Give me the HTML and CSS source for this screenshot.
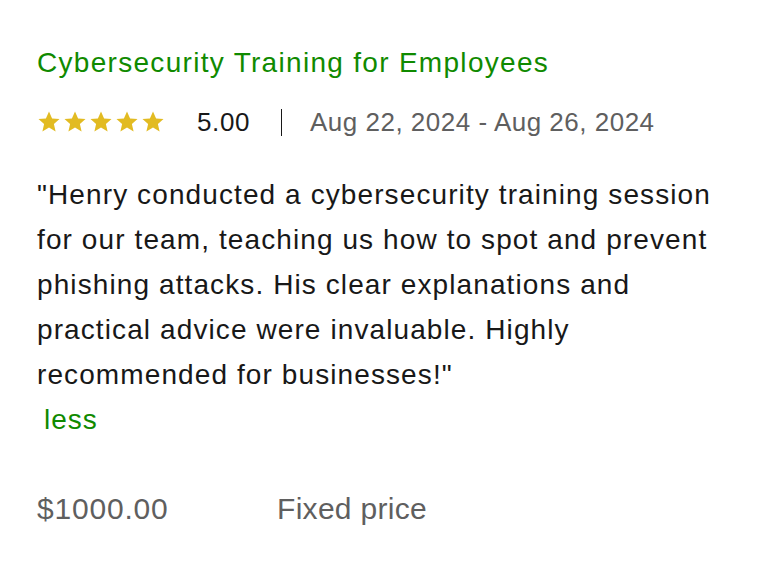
FILE: index.html
```
<!DOCTYPE html>
<html>
<head>
<meta charset="utf-8">
<link rel="stylesheet" href="styles.css">
</head>
<body>
<div class="card">
  <h2 class="title">Cybersecurity Training for Employees</h2>
  <div class="meta">
    <div class="stars">
      <svg viewBox="0 0 24 24" class="star"><path d="M12 1.5l3.1 7 7.4.6-5.6 5 1.7 7.4L12 17.6l-6.6 3.9 1.7-7.4-5.6-5 7.4-.6z"/></svg>
      <svg viewBox="0 0 24 24" class="star"><path d="M12 1.5l3.1 7 7.4.6-5.6 5 1.7 7.4L12 17.6l-6.6 3.9 1.7-7.4-5.6-5 7.4-.6z"/></svg>
      <svg viewBox="0 0 24 24" class="star"><path d="M12 1.5l3.1 7 7.4.6-5.6 5 1.7 7.4L12 17.6l-6.6 3.9 1.7-7.4-5.6-5 7.4-.6z"/></svg>
      <svg viewBox="0 0 24 24" class="star"><path d="M12 1.5l3.1 7 7.4.6-5.6 5 1.7 7.4L12 17.6l-6.6 3.9 1.7-7.4-5.6-5 7.4-.6z"/></svg>
      <svg viewBox="0 0 24 24" class="star"><path d="M12 1.5l3.1 7 7.4.6-5.6 5 1.7 7.4L12 17.6l-6.6 3.9 1.7-7.4-5.6-5 7.4-.6z"/></svg>
    </div>
    <span class="score">5.00</span>
    <span class="sep"></span>
    <span class="dates">Aug 22, 2024 - Aug 26, 2024</span>
  </div>
  <p class="review">"Henry conducted a cybersecurity training session for our team, teaching us how to spot and prevent phishing attacks. His clear explanations and practical advice were invaluable. Highly recommended for businesses!"</p>
  <a class="less">less</a>
  <div class="price-row">
    <span class="price">$1000.00</span>
    <span class="type">Fixed price</span>
  </div>
</div>
</body>
</html>
```
FILE: styles.css
```
* { box-sizing: border-box; }
body {
  margin: 0;
  background: #fff;
  font-family: "Liberation Sans", Arial, sans-serif;
  color: #181818;
}
.card {
  padding: 45px 37px 0;
  width: 758px;
}
.title {
  margin: 0;
  font-size: 28px;
  letter-spacing: 1.3px;
  font-weight: 400;
  color: #108a00;
  line-height: 36px;
}
.meta {
  display: flex;
  align-items: center;
  margin-top: 27px;
  height: 28px;
}
.stars { display: flex; gap: 2px; }
.star { width: 24px; height: 24px; fill: #e2bb22; }
.score {
  margin-left: 32px;
  font-size: 26px;
  letter-spacing: 0.6px;
  color: #181818;
}
.sep {
  width: 1px;
  height: 27px;
  background: #181818;
  margin: 0 28px 0 31px;
}
.dates {
  font-size: 26px;
  letter-spacing: 0.5px;
  color: #5f5f5f;
}
.review {
  margin: 36px 0 0;
  font-size: 28px;
  letter-spacing: 1.1px;
  line-height: 45px;
  width: 684px;
  color: #181818;
}
.less {
  display: block;
  margin-left: 7px;
  font-size: 28px;
  letter-spacing: 1px;
  line-height: 45px;
  color: #108a00;
}
.price-row {
  display: flex;
  margin-top: 44px;
  font-size: 30px;
  line-height: 45px;
  color: #5f5f5f;
}
.price { width: 240px; letter-spacing: 0.8px; }
.type { letter-spacing: 0.3px; }
```
